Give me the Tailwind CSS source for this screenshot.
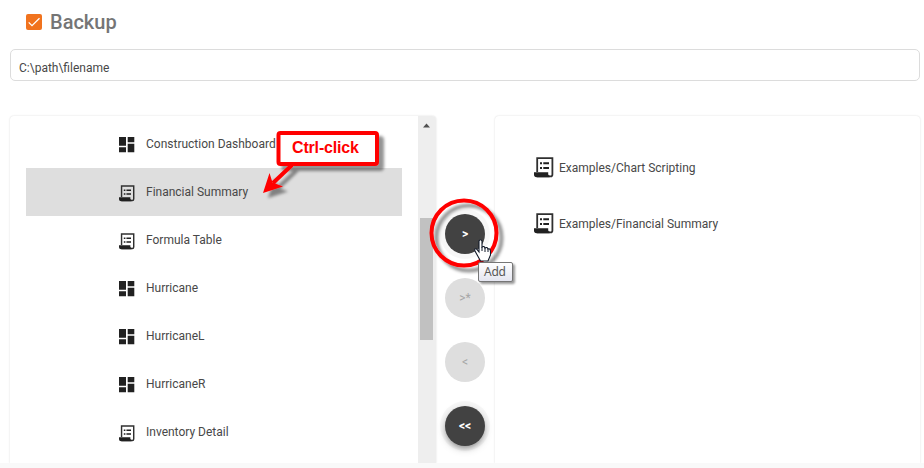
<!DOCTYPE html>
<html lang="en">
<head>
<meta charset="utf-8">
<title>Backup</title>
<script src="https://cdn.jsdelivr.net/npm/@tailwindcss/browser@4"></script>
</head>
<body class="relative h-[468px] w-[924px] overflow-hidden bg-white font-['Roboto',sans-serif] text-[12px] text-[#484848]">
<svg class="hidden">
  <symbol id="report" viewBox="0 0 20 21">
    <path d="M3.2 15V1.2H18.4V17.4Q18.4 19.3 16.7 19.3H3" fill="none" stroke="#303030" stroke-width="1.8"/>
    <path d="M0 15.2H14.2V17.2Q14.4 18.6 15.6 18.6V20.2H2.6Q0 20.2 0 17.6Z" fill="#212121"/>
    <path d="M6 6.3H8M9.3 6.3H15M6 11H8M9.3 11H15" stroke="#212121" stroke-width="1.9"/>
  </symbol>
  <symbol id="dashboard" viewBox="0 0 16 16">
    <path d="M0 0H7V8.7H0ZM8.7 0H15.3V5.2H8.7ZM0 10.3H7V15.3H0ZM8.7 6.8H15.3V15.3H8.7Z" fill="#212121"/>
  </symbol>
</svg>
<div class="flex h-[463px] flex-col">
  <header class="flex h-[49px] items-center gap-2 pb-[5px] pl-[26px]">
    <svg class="size-4 rounded-[2px] bg-[#f1731e]" viewBox="0 0 16 16"><path d="M2.7 8.4L6 11.6L13.5 4.2" fill="none" stroke="#fff" stroke-width="1.3"/></svg>
    <h1 class="text-[20px] font-medium leading-6 text-[#757575]">Backup</h1>
  </header>
  <div class="ml-[10px] flex h-8 w-[910px] items-center rounded-[5px] border border-[#dcdcdc] pl-[8px] pt-[5px]">C:\path\filename</div>
  <main class="ml-[10px] mt-[35px] flex h-[347px]">
    <section class="flex w-[426px] rounded-t-[4px] shadow-[0_0_2px_rgba(0,0,0,0.16)]">
      <ul class="w-[408px] pl-4 pt-1 [&>li]:flex [&>li]:h-12 [&>li]:w-[376px] [&>li]:items-center [&>li]:pl-[93px] [&_span]:ml-[11px]">
        <li><svg class="mt-[2px] h-4 w-4"><use href="#dashboard"/></svg><span>Construction Dashboard</span></li>
        <li class="bg-[#dedede]"><svg class="mt-[2px] h-[17px] w-4"><use href="#report"/></svg><span>Financial Summary</span></li>
        <li><svg class="mt-[2px] h-[17px] w-4"><use href="#report"/></svg><span>Formula Table</span></li>
        <li><svg class="mt-[2px] h-4 w-4"><use href="#dashboard"/></svg><span>Hurricane</span></li>
        <li><svg class="mt-[2px] h-4 w-4"><use href="#dashboard"/></svg><span>HurricaneL</span></li>
        <li><svg class="mt-[2px] h-4 w-4"><use href="#dashboard"/></svg><span>HurricaneR</span></li>
        <li><svg class="mt-[2px] h-[17px] w-4"><use href="#report"/></svg><span>Inventory Detail</span></li>
      </ul>
      <div class="w-[18px] rounded-tr-[4px] bg-[#eeeeee]">
        <svg class="ml-1 mt-[7px] h-[5px] w-[9px]" viewBox="0 0 9 5"><path d="M1 4.5L4.5 .5L8 4.5Z" fill="#505050"/></svg>
        <div class="ml-[2px] mt-[90px] h-[122px] w-[13px] bg-[#c1c1c1]"></div>
      </div>
    </section>
    <nav class="flex w-[59px] flex-col items-start gap-6 pl-[9px] pt-[98px] text-[12px] font-bold [&>button]:size-10 [&>button]:shrink-0 [&>button]:rounded-full">
      <button class="bg-[#424242] text-white shadow-[0_0_0_5px_rgba(0,0,0,0.03)]">&gt;</button>
      <button class="bg-[#dedede] font-normal text-[#a6a6a6]">&gt;*</button>
      <button class="bg-[#dedede] font-normal text-[#a6a6a6]">&lt;</button>
      <button class="bg-[#424242] text-white shadow-[0_3px_5px_-1px_rgba(0,0,0,0.3),0_3px_9px_rgba(0,0,0,0.18),0_0_0_5px_rgba(0,0,0,0.03)]">&lt;&lt;</button>
    </nav>
    <section class="flex w-[425px] flex-col gap-[35px] rounded-t-[4px] pl-[39px] pt-[41px] shadow-[0_0_2px_rgba(0,0,0,0.16)]">
      <div class="flex h-[21px] items-center gap-[5px]"><svg class="h-[21px] w-5"><use href="#report"/></svg><span>Examples/Chart Scripting</span></div>
      <div class="flex h-[21px] items-center gap-[5px]"><svg class="h-[21px] w-5"><use href="#report"/></svg><span>Examples/Financial Summary</span></div>
    </section>
  </main>
</div>
<footer class="relative h-[5px] bg-[#f9f9f9]"></footer>
<svg class="absolute left-0 top-0 h-[468px] w-[924px]" viewBox="0 0 924 468">
  <defs>
    <filter id="drop" x="-20%" y="-20%" width="150%" height="150%"><feDropShadow dx="5" dy="5" stdDeviation="1.5" flood-color="#000" flood-opacity=".42"/></filter>
    <linearGradient id="tip" x1="0" y1="0" x2="0" y2="1"><stop stop-color="#fff"/><stop offset="1" stop-color="#e4e5f0"/></linearGradient>
  </defs>
  <g filter="url(#drop)">
    <path d="M292 165L273 183" stroke="#f00" stroke-width="4"/>
    <path d="M263 193L269.5 173L272.5 182.500L283 186.500Z" fill="#f00"/>
    <rect x="278.500" y="133" width="98.500" height="31" rx="2" fill="#fff" stroke="#f00" stroke-width="4"/>
  </g>
  <circle cx="464" cy="233" r="32.500" fill="none" stroke="#f00" stroke-width="4" filter="url(#drop)"/>
  <path d="M479 241Q480.500 238.500 482 241V247Q484 245.500 485 248Q487 246.500 488 249Q490 248 490.500 251V255L488 261H480.500L475 251Q474 248 476.500 249L479 252Z" fill="#fff" stroke="#101828" stroke-width="1.100"/>
  <path d="M482 247V251M485 248V252M488 249V252" stroke="#101828"/>
  <rect x="478.500" y="262.500" width="34" height="19" rx="1.500" fill="url(#tip)" stroke="#767676" filter="drop-shadow(2px 2px 1px #0006)"/>
  <text x="292" y="153" textLength="67" font-family="Liberation Sans, sans-serif" font-weight="700" font-size="16" fill="#f00">Ctrl-click</text>
  <text x="484" y="276" textLength="22" font-family="Noto Sans, sans-serif" font-size="12" fill="#575757">Add</text>
</svg>
</body>
</html>
